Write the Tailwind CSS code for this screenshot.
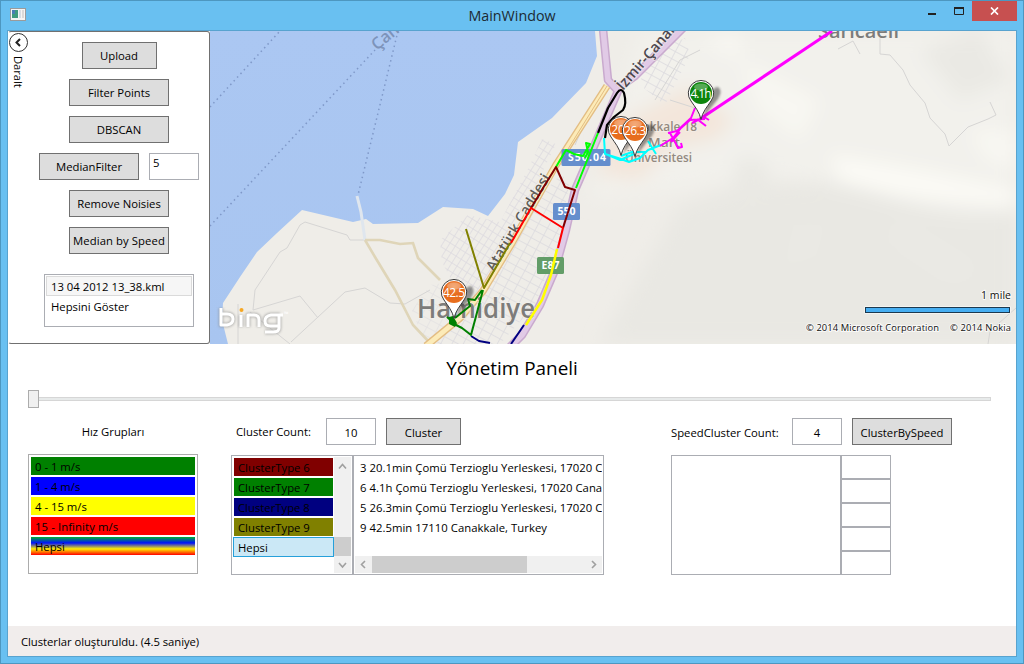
<!DOCTYPE html>
<html lang="tr">
<head>
<meta charset="utf-8">
<title>MainWindow</title>
<script src="https://cdn.jsdelivr.net/npm/@tailwindcss/browser@4"></script>
</head>
<body class="w-[1024px] h-[664px] overflow-hidden bg-[#69c0f1] text-[11.3px] leading-4 text-black font-['Open_Sans','Noto_Sans',sans-serif]">
<div class="w-full h-full border border-[#4d97c0] flex flex-col">
  <header class="relative h-[29px] shrink-0 flex justify-center">
    <svg class="absolute left-[9px] top-[7px]" width="16" height="13" viewBox="0 0 16 13"><rect x=".5" y=".5" width="15" height="12" fill="#f4f4f4" stroke="#9b9b9b"/><rect x="2" y="2" width="6" height="8" fill="#3f9a80"/><rect x="2" y="2" width="3" height="4" fill="#4a7db5"/><rect x="9" y="2" width="2" height="8" fill="#d5dde5"/><rect x="12" y="2" width="2" height="8" fill="#d9d9d9"/></svg>
    <h1 class="text-[14.300px] leading-[29px] text-[#1c2a33]">MainWindow</h1>
    <div class="absolute right-[6px] top-0 flex h-5">
      <svg width="90" height="20" viewBox="0 0 90 20"><path d="M0 13h8" stroke="#222" stroke-width="2" transform="translate(1 0)"/><path d="M27.500 7.500h9v6h-9z" fill="none" stroke="#222"/><path d="M27 7.500h10" stroke="#222" stroke-width="2" transform="translate(0 -.5)"/></svg>
      <button class="w-[45px] h-5 bg-[#c75050] flex items-center justify-center -ml-[45px]" aria-label="Close"><svg width="9" height="8" viewBox="0 0 9 8"><path d="M1 .5l7 7M8 .5l-7 7" stroke="#fff" stroke-width="1.700"/></svg></button>
    </div>
  </header>
  <main class="mx-[6px] mb-[6px] grow min-h-0 border border-[#58a3cf] bg-white flex flex-col">
    <section class="flex h-[313px] shrink-0">
      <aside class="w-[202px] h-[313px] shrink-0 flex border border-l-white border-[#707070] rounded-[3px]">
        <div class="w-[30px] shrink-0 flex flex-col items-start">
          <svg width="20" height="20" viewBox="0 0 20 20"><circle cx="9.500" cy="10.500" r="9" fill="#fff" stroke="#333"/><path d="M11 7L7.500 10.500L11 14" fill="none" stroke="#222" stroke-width="2"/></svg>
          <span class="[writing-mode:vertical-rl] mt-[4px] ml-px tracking-[-.1px]">Daralt</span>
        </div>
        <div class="w-40 pt-[10px] flex flex-col items-center gap-[10px] shrink-0">
          <button class="w-[75px] h-[27px] bg-[#ddd] border border-[#707070]">Upload</button>
          <button class="w-[100px] h-[27px] bg-[#ddd] border border-[#707070]">Filter Points</button>
          <button class="w-[100px] h-[27px] bg-[#ddd] border border-[#707070]">DBSCAN</button>
          <div class="flex gap-[10px]">
            <button class="w-[100px] h-[27px] bg-[#ddd] border border-[#707070]">MedianFilter</button>
            <div class="w-[50px] h-[27px] border border-[#abadb3] pl-[3px] pt-px">5</div>
          </div>
          <button class="w-[100px] h-[27px] bg-[#ddd] border border-[#707070] whitespace-nowrap">Remove Noisies</button>
          <button class="w-[100px] h-[27px] bg-[#ddd] border border-[#707070] whitespace-nowrap flex items-center justify-center tracking-[.08px]">Median by Speed</button>
          <ul class="w-[150px] h-[53px] mt-[10px] border border-[#abadb3] p-px shrink-0">
            <li class="h-5 border border-[#dadada] bg-[#f6f6f6] pl-1 pt-[2px]">13 04 2012 13_38.kml</li>
            <li class="h-5 pl-[5px] pt-[3px]">Hepsini Göster</li>
          </ul>
        </div>
      </aside>
      <svg class="block shrink-0" width="806" height="313" viewBox="210 31 806 313">
        <defs>
          <filter id="soft" x="-50%" y="-50%" width="200%" height="200%"><feGaussianBlur stdDeviation="9"/></filter>
          <filter id="shade" x="-50%" y="-50%" width="200%" height="200%"><feGaussianBlur stdDeviation="1"/></filter>
          <linearGradient id="sea" x2="0" y2="1"><stop stop-color="#abc7f2"/><stop offset="1" stop-color="#a8c5f0"/></linearGradient>
          <radialGradient id="or" cx=".5" cy=".25" r=".8"><stop stop-color="#f08a45"/><stop offset=".5" stop-color="#e66a1c"/><stop offset="1" stop-color="#e8701f"/></radialGradient>
          <g id="pin"><path d="M2 25L9 2Q12-6 17-6Q22-3 17 6Q10 14 2 25Z" fill="#333" opacity=".5" filter="url(#shade)"/><path d="M0 26.500C-1.500 19-6 14-10 8A12.700 12.700 0 1 1 10 8C6 14 1.500 19 0 26.500Z" fill="#fff" stroke="#3a3a3a"/></g>
          <pattern id="st1" width="8" height="6" patternUnits="userSpaceOnUse" patternTransform="rotate(-58)"><path d="M0 .5H8M.5 0V6" stroke="#dddbdf" stroke-width=".8" fill="none"/></pattern>
          <pattern id="st2" width="10" height="8" patternUnits="userSpaceOnUse" patternTransform="rotate(28)"><path d="M0 .5H10M.5 0V8" stroke="#dcdade" stroke-width=".8" fill="none"/></pattern>
        </defs>
        <rect x="210" y="31" width="806" height="313" fill="#efede8"/>
        <g filter="url(#soft)">
          <path d="M640 31H1016V240Q900 215 850 190Q760 165 690 190L590 200Z" fill="#f2f1ec"/>
          <path d="M680 205Q800 165 880 195Q950 220 1016 212V344H600Z" fill="#e9e8e3"/>
          <path d="M830 155Q900 165 1016 190V205Q900 200 840 182Z" fill="#fbfaf5"/>
          <path d="M740 60L820 100L800 140L760 110ZM970 130l46 0v40l-30-10zM700 40l40-9v30z" fill="#f8f7f2"/>
          <path d="M920 50l60-20 30 50-50 20zM740 155l30 10-10 40-30-10zM900 220l80 50-30 10-60-40zM800 225l20 0-10 30-20 10z" fill="#eae9e4"/>
          <path d="M605 130L690 85L735 120L715 140L670 150L640 180L600 175Z" fill="#f3e0d0" opacity=".6"/>
        </g>
        <path d="M210 31H595L597 56L586 83L552 118L518 142L514 175L505 194L488 216L473 209L443 207L418 223L373 224L366 219L353 222L302 210L277 233L257 252L240 277L223 303L222 320L228 344H210Z" fill="url(#sea)"/>
        <path d="M542 139L556 144L507 245L475 295L455 287L442 262L440 240L468 215L500 222L530 165Z" fill="url(#st1)"/>
        <path d="M560 175L570 180L558 245L535 305L500 344H435L484 290L532 205Z" fill="url(#st2)"/>
        <path d="M430 285L450 282L455 330L425 344L412 310Z" fill="url(#st2)" opacity=".6"/>
        <path d="M645 55L685 38L690 55L665 105L640 85Z" fill="url(#st2)"/>
        <g fill="none" stroke="#d6d5d4" stroke-width="1">
          <path d="M365 240L350 240L347 235L305 222L300 225L287 248L280 252L255 290L253 310M291 342L345 292L365 288L390 303L405 304L430 290M253 310L300 296L318 318M238 304V344M250 312L290 344M655 100L680 60L700 50M880 38V54L890 55L903 70L910 85L925 103L930 118L945 134L949 146L960 135L968 127L988 119L996 115L990 102M838 49L853 41L860 54M990 331L1016 308M670 100L695 108M575 145L586 120M990 331L988 344"/>
        </g>
        <g fill="none" stroke="#7f98c8" stroke-width="1.500" stroke-dasharray="1.500 3.500">
          <path d="M210 107L280 31M210 226L375 50M398 31L358 195"/>
        </g>
        <path d="M357 196L361 212L365 240" fill="none" stroke="#dfe6ee" stroke-width="3"/>
        <path d="M365 240H380L400 244L413 243L418 258L440 280M365 240L375 257L395 290L413 325L430 343" fill="none" stroke="#dfd5b8" stroke-width="2.600"/>
        <g fill="none" stroke-linejoin="round">
          <path d="M603 29L608 80L618 91L575 190L566 230L555 270L540 305L522 335L510 347M615 90L635 76L684 27" stroke="#c9aace" stroke-width="8.500"/>
          <path d="M603 29L608 80L618 91L575 190L566 230L555 270L540 305L522 335L510 347M615 90L635 76L684 27" stroke="#e1cae6" stroke-width="5.500"/>
          <path d="M426 346L460 318L483 291L512 243L532 207L556 165L607 86" stroke="#e3bd83" stroke-width="7.500"/>
          <path d="M426 346L460 318L483 291L512 243L532 207L556 165L607 86" stroke="#fcebb8" stroke-width="4.800"/>
          <path d="M560 162L607 86" stroke="#e3bd83" stroke-width="1"/>
        </g>
        <g font-family="Open Sans, Noto Sans, sans-serif" fill="#7d7c7a" font-weight="600" stroke="#f3f1ec" stroke-opacity=".6" stroke-width="2" paint-order="stroke">
          <text x="417" y="318" font-size="27" textLength="118" lengthAdjust="spacingAndGlyphs">Hamidiye</text>
          <text x="818" y="38" font-size="19.500" textLength="81" lengthAdjust="spacingAndGlyphs">Sarıcaeli</text>
          <text transform="translate(377 51) rotate(-40)" font-size="16.500" fill="#7d93ba" stroke="none">Çanakkale</text>
          <text transform="translate(494 272) rotate(-59)" font-size="14.500" fill="#5f5d58" textLength="110" lengthAdjust="spacingAndGlyphs">Atatürk Caddesi</text>
          <text transform="translate(623 91) rotate(-49)" font-size="14.500" fill="#4d484f" textLength="113" lengthAdjust="spacingAndGlyphs">İzmir-Çanakkale</text>
          <g font-size="12" fill="#93897f">
            <text x="621" y="131" textLength="76" lengthAdjust="spacingAndGlyphs">Çanakkale 18</text>
            <text x="648" y="147" textLength="32" lengthAdjust="spacingAndGlyphs">Mart</text>
            <text x="625" y="162" textLength="67" lengthAdjust="spacingAndGlyphs">Üniversitesi</text>
          </g>
        </g>
        <g font-family="Open Sans, Noto Sans, sans-serif" font-weight="700" font-size="10.500" fill="#fff" text-anchor="middle">
          <rect x="561.500" y="149" width="49" height="17" rx="1.500" fill="#658ecd"/><text x="587" y="160.500" textLength="38">S50.04</text>
          <rect x="553" y="203" width="27" height="17" rx="1.500" fill="#658ecd"/><text x="566.500" y="214.500">550</text>
          <rect x="537" y="257" width="27" height="17" rx="1.500" fill="#639d68"/><text x="550.500" y="269">E87</text>
        </g>
        <g fill="none" stroke-width="2" stroke-linejoin="round">
          <path d="M598 133L608 108L617 93Q621 87 624 93Q627 104 623 110L614 117L607 125L605 138" stroke="#000" stroke-width="2.200"/>
          <path d="M598 133L576 188M556 167L566 150L574 154L583 156L590 144L586 143L588 152L585 158" stroke="#0f0"/>
          <path d="M531 208L539 195L543 188L556 167L565 187L575 190L563 228" stroke="#800000"/>
          <path d="M511 243L531 208L563 228L558 248" stroke="#f00"/>
          <path d="M557 249L551 275L542 300L526 325" stroke="#ff0" stroke-width="2.500"/>
          <path d="M524 325L511 344M471 336L479 341L490 343" stroke="navy"/>
          <path d="M510 243L484 288L466 229" stroke="olive"/>
          <path d="M483 290L471 335L462 328L452 323M482 290L475 300L468 299L470 306L455 318M447 317L456 325" stroke="green"/>
          <path d="M449 317l4-1 4 7-2 4-6-3z" fill="green"/>
          <path d="M604 138L605 154L618 158L629 162L640 158L648 150L661 145M621 156L632 152L646 152M648 141L656 154M608 155L620 160L634 154" stroke="#0ff"/>
          <path d="M660 146L673 138L681 128L690 120L705 119M668 133L677 131L691 118L695 108M670 133L676 144L678 148L682 147L681 143M671 142L680 132M697 119L706 126M692 123L704 117L709 120" stroke="#f0f"/>
          <path d="M700 119L832 31" stroke="#f0f" stroke-width="3"/>
        </g>
        <g font-family="Open Sans, Noto Sans, sans-serif" font-size="12" fill="#fff" text-anchor="middle">
          <g transform="translate(621 129)"><use href="#pin"/><circle r="11" fill="url(#or)"/><ellipse cy="-6" rx="7" ry="3.500" fill="#fff" opacity=".28"/><text x="-3" y="4.500">20</text></g>
          <g transform="translate(635 130)"><use href="#pin"/><circle r="11" fill="url(#or)"/><ellipse cy="-6" rx="7" ry="3.500" fill="#fff" opacity=".28"/><text x="0" y="4.500" textLength="22">26.3</text></g>
          <g transform="translate(701 93)"><use href="#pin"/><circle r="11" fill="#0c850c"/><ellipse cy="-6" rx="7" ry="3.500" fill="#fff" opacity=".3"/><text x="0" y="4.500" textLength="21">4.1h</text></g>
          <g transform="translate(454 292)"><use href="#pin"/><circle r="11" fill="url(#or)"/><ellipse cy="-6" rx="7" ry="3.500" fill="#fff" opacity=".28"/><text x="0" y="4.500" textLength="22">42.5</text></g>
        </g>
        <g fill="none" stroke-linejoin="round">
          <path d="M221 308V325H227Q233 324 233 319Q233 314 227 314H222M241 315V327M248 327V315H254Q259 315 259 320V327M280 315H271Q265 316 265 321Q265 326 270 326H279M279 315V328Q279 332 273 332H265" stroke="#8a8a8a" stroke-opacity=".5" stroke-width="5" filter="url(#shade)"/>
          <path d="M221 308V325H227Q233 324 233 319Q233 314 227 314H222M241 315V327M248 327V315H254Q259 315 259 320V327M283 315H271Q265 316 265 321Q265 326 270 326H279M279 315V328Q279 332 273 332H265" stroke="#fff" stroke-width="3"/>
          <circle cx="241.500" cy="310" r="2" fill="#f6a723"/>
        </g>
        <text x="284" y="316" font-size="6" font-family="Open Sans, sans-serif" fill="#fff">™</text>
        <g font-family="Open Sans, Noto Sans, sans-serif" fill="#111" text-anchor="end" stroke="#fff" stroke-opacity=".7" stroke-width="2" paint-order="stroke">
          <text x="1011" y="299" font-size="10.500" textLength="30">1 mile</text>
          <text x="939" y="331" font-size="9.400" textLength="133">© 2014 Microsoft Corporation</text>
          <text x="1011" y="331" font-size="9.400" textLength="61">© 2014 Nokia</text>
        </g>
        <rect x="864.500" y="306.500" width="146" height="7" fill="#fff"/>
        <rect x="865.500" y="307.500" width="144" height="5" fill="#46aef2" stroke="#1c3950"/>
      </svg>
    </section>
    <section class="h-[282px] shrink-0 flex flex-col">
      <h2 class="text-center text-[18.900px] leading-6 mt-3">Yönetim Paneli</h2>
      <div class="mt-[10px] ml-5 w-[963px] h-[18px] flex items-center">
        <div class="w-[11px] h-[18px] border border-[#acacac] bg-[#f0f0f0]"></div>
        <div class="grow h-1 border border-l-0 border-[#d6d6d6] bg-[#e7eaea]"></div>
      </div>
      <div class="flex mt-[10px] ml-5">
        <div class="w-[170px]">
          <div class="h-[36px] pt-[6px] text-center">Hız Grupları</div>
          <ul class="h-[120px] border border-[#acacac] p-[2px] flex flex-col gap-[2px]">
            <li class="h-[18px] bg-[#008000] pl-1 pt-[2px]">0 - 1 m/s</li>
            <li class="h-[18px] bg-[#0000ff] pl-1 pt-[2px]">1 - 4 m/s</li>
            <li class="h-[18px] bg-[#ffff00] pl-1 pt-[2px]">4 - 15 m/s</li>
            <li class="h-[18px] bg-[#ff0000] pl-1 pt-[2px] tracking-[.1px]">15 - Infinity m/s</li>
            <li class="h-[18px] bg-[linear-gradient(#00b030,#0010ff_33%,#ffee00_66%,#ff0000)] pl-1 pt-[2px]">Hepsi</li>
          </ul>
        </div>
        <div class="w-[373px] ml-[33px]">
          <div class="h-[37px] flex items-start">
            <span class="w-[95px] pl-[5px] pt-[6px] whitespace-nowrap">Cluster Count:</span>
            <div class="w-[50px] h-[27px] border border-[#abadb3] flex items-center justify-center pt-[2px]">10</div>
            <button class="ml-[10px] w-[75px] h-[27px] bg-[#ddd] border border-[#707070] pt-[2px]">Cluster</button>
          </div>
          <div class="flex h-[120px]">
            <div class="w-[122px] border border-[#abadb3] p-px flex shrink-0">
              <ul class="w-[101px] pt-px flex flex-col gap-[2px]">
                <li class="h-[18px] ml-px mr-px bg-[#800000] pl-1 pt-[2px]">ClusterType 6</li>
                <li class="h-[18px] ml-px mr-px bg-[#008000] pl-1 pt-[2px]">ClusterType 7</li>
                <li class="h-[18px] ml-px mr-px bg-[#000080] pl-1 pt-[2px]">ClusterType 8</li>
                <li class="h-[18px] ml-px mr-px bg-[#808000] pl-1 pt-[2px]">ClusterType 9</li>
                <li class="h-5 -mt-px bg-[#cbe8f6] border border-[#26a0da] pl-1 pt-[2px]">Hepsi</li>
              </ul>
              <div class="w-[17px] bg-[#f0f0f0] flex flex-col items-center">
                <svg width="17" height="80" viewBox="0 0 17 80"><path d="M5 11.500L8.500 7.500L12 11.500" fill="none" stroke="#a0a0a0" stroke-width="1.600"/></svg>
                <div class="w-[17px] h-[19px] bg-[#cdcdcd]"></div>
                <svg width="17" height="17" viewBox="0 0 17 17"><path d="M5 7L8.500 11L12 7" fill="none" stroke="#a0a0a0" stroke-width="1.600"/></svg>
              </div>
            </div>
            <div class="w-[251px] border border-[#abadb3] p-px flex flex-col overflow-hidden whitespace-nowrap">
              <ul class="h-[99px] overflow-hidden pl-[5px] pt-[2px] tracking-[.04px]">
                <li class="h-5 pt-px">3 20.1min Çomü Terzioglu Yerleskesi, 17020 C</li>
                <li class="h-5 pt-px">6 4.1h Çomü Terzioglu Yerleskesi, 17020 Cana</li>
                <li class="h-5 pt-px">5 26.3min Çomü Terzioglu Yerleskesi, 17020 C</li>
                <li class="h-5 pt-px">9 42.5min 17110 Canakkale, Turkey</li>
              </ul>
              <div class="h-[17px] bg-[#f0f0f0] flex items-center justify-between">
                <svg width="17" height="17" viewBox="0 0 17 17"><path d="M10 5L6.500 8.500L10 12" fill="none" stroke="#a0a0a0" stroke-width="1.600"/></svg>
                <div class="w-[155px] h-[17px] bg-[#cdcdcd] mr-auto"></div>
                <svg width="17" height="17" viewBox="0 0 17 17"><path d="M7 5L10.500 8.500L7 12" fill="none" stroke="#a0a0a0" stroke-width="1.600"/></svg>
              </div>
            </div>
          </div>
        </div>
        <div class="ml-[67px]">
          <div class="h-[37px] flex items-start">
            <span class="w-[121px] pt-[7px] whitespace-nowrap">SpeedCluster Count:</span>
            <div class="w-[50px] h-[27px] border border-[#abadb3] flex items-center justify-center pt-[2px]">4</div>
            <button class="ml-[10px] w-[100px] h-[27px] bg-[#ddd] border border-[#707070] pt-[2px]">ClusterBySpeed</button>
          </div>
          <div class="flex h-[120px]">
            <div class="w-[170px] border border-[#abadb3]"></div>
            <div class="w-[50px] flex flex-col">
              <div class="h-6 border border-[#abadb3]"></div>
              <div class="h-6 border border-[#abadb3]"></div>
              <div class="h-6 border border-[#abadb3]"></div>
              <div class="h-6 border border-[#abadb3]"></div>
              <div class="h-6 border border-[#abadb3]"></div>
            </div>
          </div>
        </div>
      </div>
    </section>
    <footer class="grow bg-[#f1edec] flex items-center pl-[13px] pt-px tracking-[-.05px]">Clusterlar oluşturuldu. (4.5 saniye)</footer>
  </main>
</div>
</body>
</html>
